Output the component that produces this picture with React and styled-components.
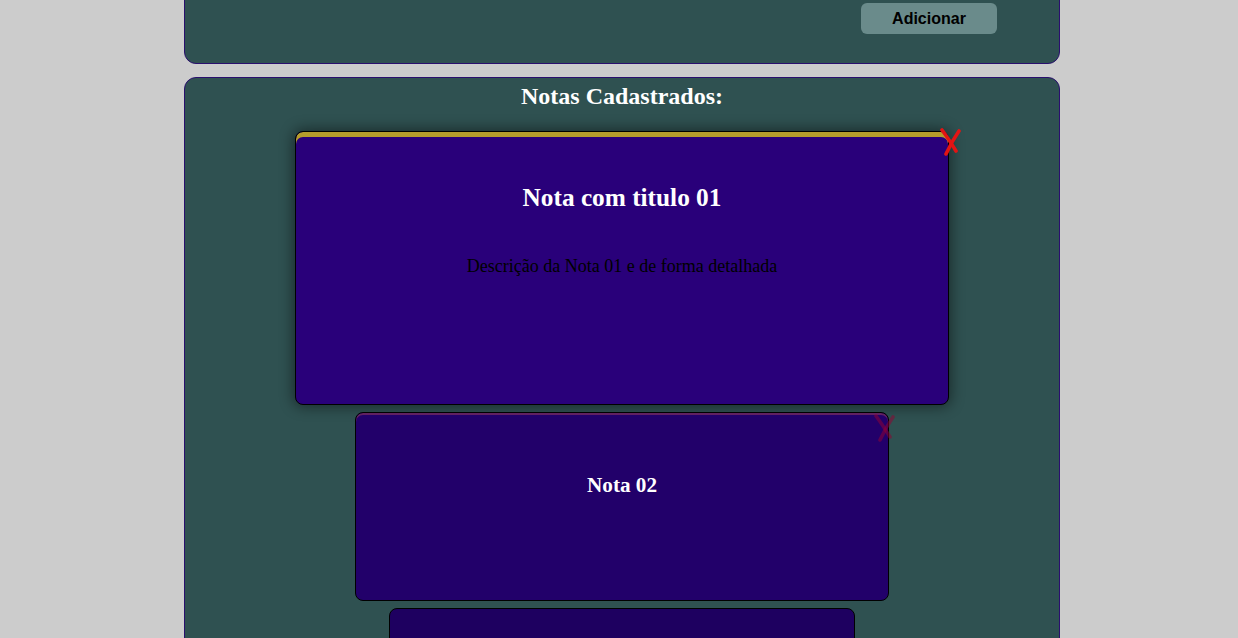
import React from 'react'
import styled, { createGlobalStyle } from 'styled-components'

const GlobalStyle = createGlobalStyle`
  html, body {
    margin: 0;
    padding: 0;
    background: #cccccc;
    overflow: hidden;
  }
`

const notes = [
  { id: 1, title: 'Nota com titulo 01', text: 'Descrição da Nota 01 e de forma detalhada' },
  { id: 2, title: 'Nota 02', text: '' },
  { id: 3, title: 'Nota 03', text: '' },
]

const CrossIcon = () => (
  <svg width="24" height="28" viewBox="0 0 24 28" fill="none">
    <path d="M3 2 Q9 10 17 23" stroke="currentColor" strokeWidth="3.6" strokeLinecap="round" />
    <path d="M20 3 Q13 13 7 26" stroke="currentColor" strokeWidth="3.6" strokeLinecap="round" />
  </svg>
)

const App = () => {
  return (
    <Page>
      <GlobalStyle />
      <FormPanel>
        <Actions>
          <AddButton>Adicionar</AddButton>
        </Actions>
      </FormPanel>

      <ListPanel>
        <Heading>Notas Cadastrados:</Heading>
        <Stack>
          {notes.map((n, i) => (
            <Card key={n.id} level={i}>
              {i < 2 && (
                <Remove level={i}>
                  <CrossIcon />
                </Remove>
              )}
              <Title level={i}>{n.title}</Title>
              {n.text && <Text>{n.text}</Text>}
            </Card>
          ))}
        </Stack>
      </ListPanel>
    </Page>
  )
}
export default App

const Page = styled.div`
  width: 876px;
  margin: 0 auto;
  padding-left: 6px;
  display: flex;
  flex-direction: column;
  gap: 13px;
  font-family: "Liberation Serif", "Times New Roman", serif;
`

const Panel = styled.section`
  background: #2f5151;
  border: 1px solid #2a0f6e;
  border-radius: 12px;
`

const FormPanel = styled(Panel)`
  margin-top: -40px;
  padding: 42px 62px 29px 0;
`

const Actions = styled.div`
  display: flex;
  justify-content: flex-end;
`

const AddButton = styled.button`
  width: 136px;
  height: 31px;
  border: none;
  border-radius: 6px;
  background: #6a8b8b;
  color: #000;
  font-family: "Liberation Sans", Arial, sans-serif;
  font-weight: bold;
  font-size: 16px;
`

const ListPanel = styled(Panel)`
  padding-top: 4px;
  height: 700px;
`

const Heading = styled.h2`
  margin: 0;
  text-align: center;
  color: #ffffff;
  font-size: 24px;
  line-height: 28px;
`

const Stack = styled.div`
  display: flex;
  flex-direction: column;
  align-items: center;
  margin-top: 21px;
  gap: 7px;
`

const widths = [654, 534, 466]
const heights = [274, 189, 200]
const fills = ['#29007a', '#22006a', '#1e0060']

const Card = styled.article`
  position: relative;
  box-sizing: border-box;
  width: ${p => widths[p.level]}px;
  height: ${p => heights[p.level]}px;
  background: ${p => fills[p.level]};
  border: 1px solid #000;
  border-radius: 8px;
  display: flex;
  flex-direction: column;
  align-items: center;
  padding-top: ${p => (p.level === 0 ? 51 : 60)}px;
  box-shadow: ${p =>
    p.level === 0
      ? 'inset 0 5px 0 #b69c2c, 0 0 14px 2px rgba(0,0,0,0.45)'
      : p.level === 1
      ? 'inset 0 2px 0 rgba(150,60,90,0.55)'
      : 'none'};
`

const Remove = styled.span`
  position: absolute;
  display: block;
  line-height: 0;
  top: ${p => (p.level === 0 ? -4 : 1)}px;
  right: ${p => (p.level === 0 ? -15 : -9)}px;
  color: ${p => (p.level === 0 ? '#e21414' : 'rgba(150,0,50,0.5)')};
`

const Title = styled.h3`
  margin: 0;
  color: #ffffff;
  font-weight: bold;
  font-size: ${p => (p.level === 0 ? 25.3 : 21.2)}px;
  line-height: ${p => (p.level === 0 ? 28 : 24)}px;
`

const Text = styled.p`
  margin: 45px 0 0;
  color: #000;
  font-size: 18px;
  line-height: 21px;
`
